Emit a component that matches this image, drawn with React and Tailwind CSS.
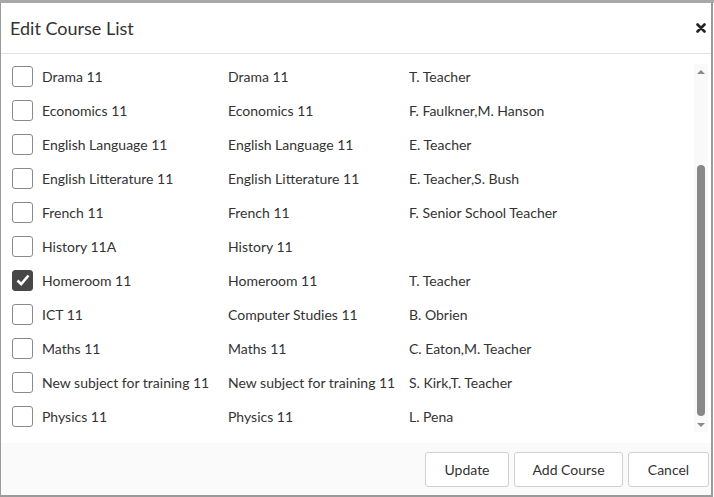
import { useState } from 'react'

const courses = [
  { name: 'Drama 11', subject: 'Drama 11', teacher: 'T. Teacher' },
  { name: 'Economics 11', subject: 'Economics 11', teacher: 'F. Faulkner,M. Hanson' },
  { name: 'English Language 11', subject: 'English Language 11', teacher: 'E. Teacher' },
  { name: 'English Litterature 11', subject: 'English Litterature 11', teacher: 'E. Teacher,S. Bush' },
  { name: 'French 11', subject: 'French 11', teacher: 'F. Senior School Teacher' },
  { name: 'History 11A', subject: 'History 11', teacher: '' },
  { name: 'Homeroom 11', subject: 'Homeroom 11', teacher: 'T. Teacher', checked: true },
  { name: 'ICT 11', subject: 'Computer Studies 11', teacher: 'B. Obrien' },
  { name: 'Maths 11', subject: 'Maths 11', teacher: 'C. Eaton,M. Teacher' },
  { name: 'New subject for training 11', subject: 'New subject for training 11', teacher: 'S. Kirk,T. Teacher' },
  { name: 'Physics 11', subject: 'Physics 11', teacher: 'L. Pena' },
]

function Checkbox({ checked, onClick }) {
  return (
    <button
      onClick={onClick}
      className={`w-[21px] h-[21px] rounded-[3px] border flex items-center justify-center shrink-0 ${
        checked ? 'bg-[#474747] border-[#474747]' : 'bg-white border-[#8a8a8a]'
      }`}
    >
      {checked && (
        <svg width="16" height="16" viewBox="0 0 16 16">
          <path d="M2.5 8.5 L6.2 12.2 L13.5 3.5" fill="none" stroke="white" strokeWidth="2.6" />
        </svg>
      )}
    </button>
  )
}

export default function App() {
  const [rows, setRows] = useState(courses)

  const toggle = (i) => {
    setRows(rows.map((r, j) => (j === i ? { ...r, checked: !r.checked } : r)))
  }

  return (
    <div className="w-[714px] h-[497px] bg-white flex flex-col text-[#333] font-['Lato','Noto_Sans',sans-serif]">
      {/* top strip */}
      <div className="h-[3px] bg-[#a8a8a8] shrink-0" />

      <div className="flex-1 flex flex-col border-l border-r-2 border-b-2 border-[#9a9a9a] mr-[1px] min-h-0">
        {/* header */}
        <div className="h-[51px] flex items-center justify-between pl-[9px] pr-[4px] border-b border-[#e3e3e3] shrink-0">
          <h1 className="text-[18px] leading-none pb-[1px]">Edit Course List</h1>
          <button className="w-[12px] h-[12px] flex items-center justify-center">
            <svg width="10" height="10" viewBox="0 0 10 10">
              <path d="M1.5 1.5 L8.5 8.5 M8.5 1.5 L1.5 8.5" stroke="#222" strokeWidth="2.6" strokeLinecap="round" />
            </svg>
          </button>
        </div>

        {/* list + scrollbar */}
        <div className="flex-1 flex min-h-0">
          <div className="flex-1 pt-[5px] pl-[11px] text-[14px]">
            {rows.map((r, i) => (
              <div key={r.name} className="h-[34px] flex items-center">
                <Checkbox checked={r.checked} onClick={() => toggle(i)} />
                <span className="w-[195px] pl-[9px] whitespace-nowrap">{r.name}</span>
                <span className="w-[181px] whitespace-nowrap">{r.subject}</span>
                <span className="whitespace-nowrap">{r.teacher}</span>
              </div>
            ))}
          </div>
          <div className="w-[14px] mr-[3px] mt-[10px] mb-[11px] bg-[#f9f9f9] flex flex-col items-center">
            <svg width="10" height="14" viewBox="0 0 10 14" className="mt-[1px]">
              <path d="M1 9 L5 5 L9 9 Z" fill="#8a8a8a" />
            </svg>
            <div className="flex-1 w-full flex flex-col justify-end px-[3px] pb-[2px]">
              <div className="h-[251px] bg-[#888] rounded-full" />
            </div>
            <svg width="10" height="14" viewBox="0 0 10 14">
              <path d="M1 5 L9 5 L5 9 Z" fill="#8a8a8a" />
            </svg>
          </div>
        </div>

        {/* footer */}
        <div className="h-[52px] bg-[#fafafa] flex items-center justify-end gap-[5px] pr-[2px] pt-[1px] shrink-0 text-[14px]">
          <button className="w-[84px] h-[35px] bg-white border border-[#d0d0d0] rounded-[3px]">Update</button>
          <button className="w-[109px] h-[35px] bg-white border border-[#d0d0d0] rounded-[3px]">Add Course</button>
          <button className="w-[81px] h-[35px] bg-white border border-[#d0d0d0] rounded-[3px]">Cancel</button>
        </div>
      </div>
    </div>
  )
}
